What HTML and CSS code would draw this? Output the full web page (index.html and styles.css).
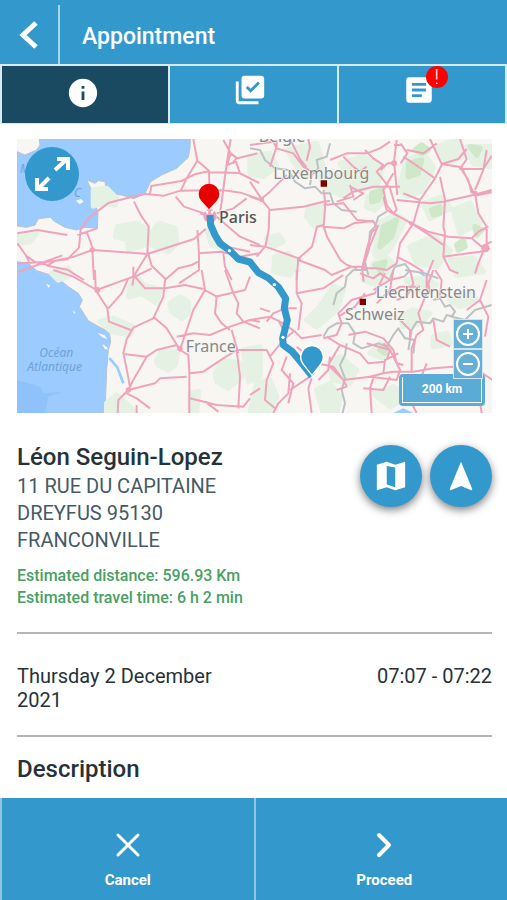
FILE: index.html
```html
<!DOCTYPE html>
<html lang="en">
<head>
    <meta charset="UTF-8">
    <meta name="viewport" content="width=device-width, initial-scale=1.0">
    <title>Appointment</title>
    <link rel="stylesheet" href="styles.css">
</head>
<body>

<div class="app">
    <header class="header">
        <button type="button" class="btn-back" aria-label="Back">
            <svg width="20" height="30" viewBox="0 0 20 30"><path d="M17 3L4 15l13 12" fill="none" stroke="#fff" stroke-width="5"/></svg>
        </button>
        <h1>Appointment</h1>
    </header>

    <nav class="tabs">
        <button type="button" class="tab active" aria-label="Information">
            <svg class="icon" viewBox="0 0 24 24"><path d="M12 2C6.480 2 2 6.480 2 12s4.480 10 10 10 10-4.480 10-10S17.520 2 12 2zm1 15h-2v-6h2v6zm0-8h-2V7h2v2z"/></svg>
        </button>
        <button type="button" class="tab" aria-label="Tasks">
            <span class="icon-wrap">
                <svg class="icon" viewBox="0 0 24 24"><path d="M20 2H8c-1.100 0-2 .9-2 2v12c0 1.100.9 2 2 2h12c1.100 0 2-.9 2-2V4c0-1.100-.9-2-2-2zm-7.530 12L9 10.500l1.400-1.410 2.070 2.080L17.600 6 19 7.410 12.470 14zM4 6H2v14c0 1.100.9 2 2 2h14v-2H4V6z"/></svg>
            </span>
        </button>
        <button type="button" class="tab" aria-label="Notes">
            <span class="icon-wrap">
                <svg class="icon" viewBox="0 0 24 24"><path d="M19 3H5c-1.100 0-2 .9-2 2v14c0 1.100.9 2 2 2h14c1.100 0 2-.9 2-2V5c0-1.100-.9-2-2-2zm-5 14H7v-2h7v2zm3-4H7v-2h10v2zm0-4H7V7h10v2z"/></svg>
                <span class="badge">!</span>
            </span>
        </button>
    </nav>

    <main class="content">
        <!-- Map -->
        <div class="map">
            <svg class="map-image" viewBox="21 27 1425 822" role="img" aria-label="Route from Paris">
                <rect class="land" x="21" y="27" width="1425" height="822"/>

                <!-- Sea -->
                <path class="sea" d="M88 27H541L540 55 535 82 500 115 455 135 422 155 405 190 372 206 335 195 290 190 285 155 265 152 255 160 230 150 245 180 255 215 264 250 262 295 225 292 200 300 165 292 130 272 122 262 85 266 75 285 50 292 21 288V65L45 75 80 60 90 45z"/>
                <path class="sea" d="M21 395L55 400 80 422 122 435 150 450 175 470 205 490 217 510 208 530 235 572 270 592 298 605 302 635 295 660 290 720 285 849H21z"/>
                <path class="sea-deep" d="M21 750L90 770 100 790 155 786 115 800 105 849H21z"/>
                <path class="river" d="M298 684L322 712 340 760"/>
                <path class="lake" d="M1150 849l30-14 30 14zM1222 425l40 15-10 8z"/>
                <path class="land" d="M198 212l15-5 8 8-12 8zM108 462l12 4-4 8zM188 543l8 3-3 6zM262 608l22 8 8 12-15-6zM276 642l14 8 4 10-10-4z"/>

                <!-- Forests -->
                <g class="forest">
                    <path d="M250 180l40-5 30 30-5 20-35-5-30 8zM322 290l60-10 30 20-10 45-45 15-5-30-35-10zM425 310l20-30 50 15 5 45-25 25-50-20zM590 300l30 10 15 45-30-10zM30 315l50-5-20 25-35 5zM125 430l50-15 10 20-40 15z"/>
                    <path d="M270 575l40-10 60 25-10 25-55-10zM365 450l15-10 20 25 50 15-10 40-45-30-40 10zM480 520l30-20 25 15 0 35-20 15-30-20zM440 690l15-25 50 0-10 40-20 15-30-15zM615 730l25-40 50 10 5 40-40 35-35-20zM700 660l50-10v90l-35 15zM540 790l25-5-5 64h-20zM290 820l30-25 50 45v9h-80z"/>
                    <path d="M720 80l60-10 20 40-40 30-40-10zM830 60l90-20 20 70-60 30zM895 230l40-5v60l-20 5-25-30zM770 325l35-10 15 20-30 15zM795 380l40-10 25 30-20 35-50-10zM990 100l70-20 60 30-20 60-60 10zM930 130l70 10 50 30-50 30-60-30zM1075 200l45-25v40l-25 25-25-10zM1105 280l50-25 30 15-40 80-30 35-20-10zM1090 400l40-15 25 20-30 30h-40zM1190 90l50-20 30 40-30 70-45 20-30-20zM1280 50l60-20 20 50-50 20zM1240 220l60-20 20 35-60 30zM1330 240l50-20 30 60-60 30zM1370 50h70v60l-50-10zM1200 350l70-30 50 40-40 50-60-10zM1320 390l70-5 30 40-80 10z"/>
                    <path d="M890 570l40-40 40-60 30 10-20 60-60 50zM955 700l35-20 50 40-20 40-50-10zM920 780l40-20 30 40-10 49h-40zM740 760l40-10 20 50-20 49h-60zM1080 670l30-30 30 15-20 30zM1170 560l40-20 50 10-30 30-50 10zM1090 790l60-20 40 30-50 30zM1060 450l40-15 30 10-30 20zM1190 450l60-5 30 20-70 20zM1320 510l60-20 20 20-50 20zM1270 620l40-10 10 30-50 10z"/>
                </g>
                <g class="forest dark">
                    <path d="M1120 290l40-20-15 50-35 30zM1195 100l40-10-10 40-30 10zM1215 60l20-15 20 15-20 10zM1085 190l30-10-10 30-20 5zM1095 405l30-10-10 30zM1340 345l20-15 5 20-20 10zM1395 290l20 10-15 15zM1265 240l25-10 0 20-20 5zM1110 660l20-8-5 18zM1380 50l30 5-10 20z"/>
                </g>

                <!-- Borders -->
                <g class="border">
                    <path d="M720 55l30 5 15 30 30 25 40 5 20 35 30 20 30-5 20 20 25 0 10 30 25 20 45 5M960 40l-10 40-30 10 5 25-20 20-5 30M1130 245l-25 15-10 30-15 15-5 60-10 30 10 40"/>
                    <path d="M1070 420l-40 0-20 20-5 30-25 20-10 35M1140 445l15-35 30-8 15 20-20 20M1185 420l60 10 40 15M940 620l15-25 25-15 35 0 20 30-5 30 25 15 50-15 25 10 20-35 15-20 20 30 30 5-5 40M1195 660l10-60 15-25 40 5 10-15 30 10 10-20 20 5M1270 510l20-5 15 25 15-5 15 20-10 15 40 10 30-30 50-15M1010 640l-5 35-15 30 15 40-10 35 10 40-10 40"/>
                </g>

                <!-- Roads -->
                <g class="road">
                    <path d="M550 27l12 65 35 30 1 40M562 92l-30 50-20 40-50 15-55-5-40 8-70 18-60 45-25 35-5 55-35 35-65 8-110 40 20-35 85-5 55-20M512 182l125-2 55 8 58 20M598 127l90 2 60 30M424 168l90-15 40-20 45-10M420 190l5-25M497 200l25 30 60 20M662 27l-12 75-20 150M640 30l22 40 20 15 60-15M662 70l-10 35 26-10 12 35M678 85l-10 15M372 215l20 40 24 35-4 82 140-45 35-30M247 360l5 90M230 305l20 55 165 12 10 35 45 43M247 360l-55 20-55 12-25 15 60 12 50 31M112 405l-35-8-30-20M22 340l25 35 10 20M412 372l-40 65-5 30M22 310l60-10 90 15M600 290l50 60 70 15M620 260l70 60 60 25M562 300l5 70v50l-60 40M565 370l70-5 55 15 55-10M640 370l5 40 20 40M570 250l30 10M620 250l50-15 40-30M262 295l-60 20"/>
                    <path d="M130 420l60 20 70 40 110-40 0-30M255 420l2 60 35 55 5 40 65 25M355 445l-20 45-40 45M375 440l30 35 60 0 60-10 55 12M375 440l50-25M465 450l-5 50-30 65-60 28-20 35-10 40 15 75 5 30M430 560l40 35 40 65 25 15 3 50 0 150M465 450l40-35 40-10 20-10M575 420l10 60-35 60-20 60-20 60M500 620l50-10 50 5 60-25 60-20 30 5M645 420l25 70 15 30-5 30 20 25 50 20M585 480l35 20-5 50 20 30 25 20M615 500l90-20 15-40M340 672l70 8 30-20 60-15 10 15M410 680l-40 70-15 30 80-20 15-15 80-5M355 780l-30 30-2 39M350 790l30 15 40 30M380 825v24M540 730l40-5 60-40 40-25 70 0M680 660l10 80-5 95M540 805l80 20 80 5 20-25M585 815l40 30M665 600l20 70M720 795l30-20"/>
                    <path d="M720 45l70-10 10 20 50 15 30 40 25 15M840 27l30 60 20 25M895 27l5 25-10 40M780 110l20-60 0-20M720 200l30 10 30-25 30-30 20-20M720 155l20 30 20 30 20 25 100-10 60-15 20-2M778 240l-2 60-10 50 100 35 40-35 15-60 20-5M941 180l5 40-5 70 10 30 40 70 20 15 30 10M941 225l60-5 40 50 50 5 10 20-15 10-15 50-15 60 5 40M941 290l60 5 30-15 60-8M865 385l-5 65M865 390l80 30 20 15 60-25 40 0M720 345l45 5M740 380l25-30M1020 165l10 35-50 15M1000 205l30-20 60-15 80 0M1020 170l40 20-30 20M960 90l50-20 60 0 40-15 30-20M1000 80l30 30 20 15 20-15M1065 60l25 25 30 20-20 20 40 50 20 65-10 10-20-25-10-45 30-50"/>
                    <path d="M1160 30l-8 65 10 100M1152 100l-20 0-20 20M1152 45l25 0M1172 40l20 30-20 30M1160 210l100 10 40-5 90-20 55-15M1260 27l35 75 60 10 40 85 50-10M1275 145l-35-25-60-40M1275 145l20-40M1275 145l-45 65-20 70-40 60-10 60-30 20-30-5-40 0 5-30 20-50 20-50M1120 200l10 40 75 40 60 40 35 25M1230 210l-50-20M1290 140l15 70-5 80 5 20M1205 280l50 25 60 15 70 5 20-20 30-15M1305 310l-5 70 20 40 25 10M1300 380l110-15 30-10M1395 190l10 60 25 40 0 65M1385 325l30 25 30-15M1425 350l-20 50-10 30M1295 102l50-15 25-30M1355 120l20 30 10 40M1160 380l40 20 40 25M1350 27l20 60-20 30 70 0 25-40M1190 60l50 10 40-30M1430 60l-10 60-25 60"/>
                    <path d="M720 570l60-10 40 20 35 25 20 20 60-10M770 575l20-25 35-15 35 0M780 545l-30-10M860 420v70l15 30-10 80M860 490l80-15 60-40M720 660l50 0 20 40-20 50M770 750l-5 60 30 25M850 605l-30 25-40 50M840 730l-5 60-30 30-15 29M905 745l-10 30 10 74M840 780l60-40M820 600l-15-30M830 680l-15 40 35 40-15 60M860 650l60 50 50 10 30 40 80-10 80 10 10-30-30-60-70-20M940 625l40-10 15-35-10-30 40-40 70-20 30-60M950 620l40 25 60 25 25 30 50-5M1015 615l50-10 55 20 30 35 10 40 20 5M985 560l50-30 30-40M960 680l-5 40-30 30M1000 750l10 20-30 10M1090 745l-10 30 5 74M1080 740l40-10 30-5 60 0 60-10 60-5 80 15 45 30M1120 730l5-40 40-20M1140 740l-20 40-60-5M1205 725l0-70 15-40 20-15-15-50 25-60 0-50 20-50M1250 700l-20 50M1200 420l10 40-20 40-30 10M1270 420l-15 40 5 30M1290 500l5-50-20-30M1200 630l0-30-30-30M1270 570l10 60 40 20M1180 750l20 60 20 39M1330 700l30-40M1370 540l40-30 20-60M1410 510l25 50-10 60M1400 740l15 110M1120 640l20 20-10 30M990 645l-35 60 40 40M1050 430l40 15 20-15 30 20 40-10M1150 420l-10 60-40 40M1120 500l50-30 60 0M1140 450l-50 30"/>
                </g>
                <g class="hub">
                    <circle cx="247" cy="360" r="8"/><circle cx="414" cy="372" r="6"/><circle cx="262" cy="480" r="9"/><circle cx="510" cy="656" r="8"/><circle cx="600" cy="258" r="20"/><circle cx="1152" cy="100" r="9"/><circle cx="1426" cy="355" r="12"/><circle cx="1395" cy="190" r="8"/><circle cx="756" cy="210" r="7"/><circle cx="355" cy="780" r="8"/><circle cx="1203" cy="280" r="6"/><circle cx="867" cy="388" r="6"/>
                </g>

                <!-- Labels -->
                <g class="labels">
                    <text x="746" y="37">Belgie</text>
                    <text x="790" y="146">Luxembourg</text>
                    <text x="1097" y="503">Liechtenstein</text>
                    <text x="1005" y="570">Schweiz</text>
                    <text x="527" y="667">France</text>
                    <text class="city" x="627" y="278">Paris</text>
                    <text class="water" x="88" y="680">Océan</text>
                    <text class="water" x="52" y="724">Atlantique</text>
                    <text class="water" x="30" y="130">M</text>
                    <text class="water" x="192" y="200">C</text>
                </g>
                <path fill="#800000" d="M932 151h19v19h-19zM1049 506h19v19h-19z"/>

                <!-- Route -->
                <path class="route" d="M600 255L602 285 615 315 630 340 660 362 685 387 720 396 745 428 775 444 805 471 827 505 823 535 832 570 818 625 820 645 847 665 880 705 906 738"/>
                <g fill="#fff">
                    <circle cx="658" cy="362" r="5"/><circle cx="793" cy="464" r="5"/><circle cx="819" cy="622" r="5"/>
                    <path d="M584 240l8 14 4-10zM614 240l-8 14-4-10z"/>
                </g>
                <path fill="#e60000" d="M597 238l-22-24a31 31 0 1 1 44 0z"/>
                <path class="marker" d="M906 736l-26-33a34 34 0 1 1 52 0z"/>
            </svg>

            <button type="button" class="btn-expand" aria-label="Full screen">
                <svg width="54" height="54" viewBox="0 0 54 54"><path d="M30 23L42 12M32 12h11v11M24 31L13 42M12 31v11h11" fill="none" stroke="#fff" stroke-width="4"/></svg>
            </button>
            <div class="map-scale"><span>200 km</span></div>
            <div class="map-zoom">
                <button type="button" aria-label="Zoom in">
                    <svg width="26" height="26" viewBox="0 0 26 26"><circle cx="13" cy="13" r="11"/><path d="M13 8v10M8 13h10"/></svg>
                </button>
                <button type="button" aria-label="Zoom out">
                    <svg width="26" height="26" viewBox="0 0 26 26"><circle cx="13" cy="13" r="11"/><path d="M8 13h10"/></svg>
                </button>
            </div>
        </div>

        <!-- Customer -->
        <section class="customer">
            <div class="customer-info">
                <h2>Léon Seguin-Lopez</h2>
                <p class="address">11 RUE DU CAPITAINE<br>DREYFUS 95130<br>FRANCONVILLE</p>
                <p class="estimate">Estimated distance: 596.93 Km<br>Estimated travel time: 6 h 2 min</p>
            </div>
            <div class="actions">
                <button type="button" class="btn-round" aria-label="Show map">
                    <svg class="icon" viewBox="0 0 24 24"><path fill-rule="evenodd" d="M2 4l7-2 6 2 7-2v18l-7 2-6-2-7 2zM9 5v13l6 2V6z"/></svg>
                </button>
                <button type="button" class="btn-round" aria-label="Navigate">
                    <svg class="icon" viewBox="0 0 24 24"><path d="M12 2L4 21.300l.7.7 7.300-3 7.300 3 .7-.7z"/></svg>
                </button>
            </div>
        </section>

        <!-- Date and time -->
        <section class="schedule">
            <span class="date">Thursday 2 December 2021</span>
            <span>07:07 - 07:22</span>
        </section>

        <section class="description">
            <h2>Description</h2>
        </section>
    </main>

    <footer class="footer">
        <button type="button">
            <svg width="30" height="30" viewBox="0 0 30 30"><path d="M5 5l20 20M25 5L5 25"/></svg>
            Cancel
        </button>
        <button type="button">
            <svg width="30" height="30" viewBox="0 0 30 30"><path d="M10 5l10 10-10 10" stroke-width="4"/></svg>
            Proceed
        </button>
    </footer>
</div>

</body>
</html>
```
FILE: styles.css
```css
* {
    box-sizing: border-box;
}
body {
    margin: 0;
    font-family: Roboto, sans-serif;
    background-color: #fff;
    color: #263238;
}
button {
    padding: 0;
    border: none;
    background: none;
    color: #fff;
    font-family: inherit;
    cursor: pointer;
}
svg {
    display: block;
}
h1, h2, p {
    margin: 0;
}
.app {
    display: flex;
    flex-direction: column;
    height: 100vh;
}
.icon {
    width: 34px;
    height: 34px;
    fill: #fff;
}

/* Header */
.header {
    display: flex;
    flex-shrink: 0;
    align-items: flex-end;
    height: 64px;
    background-color: #3399cc;
    color: #fff;
}
.btn-back {
    display: flex;
    align-items: center;
    justify-content: center;
    width: 60px;
    height: 59px;
    border-right: 2px solid #a6d5ee;
}
.header h1 {
    padding-left: 22px;
    font-size: 23px;
    line-height: 54px;
    font-weight: 500;
}

/* Tabs */
.tabs {
    display: grid;
    grid-template-columns: repeat(3, 1fr);
    flex-shrink: 0;
    gap: 2px;
    padding: 2px 2px 1px;
    background-color: #d5eaf5;
}
.tab {
    display: flex;
    justify-content: center;
    height: 57px;
    padding-top: 7px;
    background-color: #3399cc;
}
.tab.active {
    padding-top: 10px;
    padding-right: 4px;
    background-color: #1a4a61;
}
.icon-wrap {
    position: relative;
    margin-right: 6px;
}
.badge {
    position: absolute;
    top: -7px;
    right: -12px;
    width: 22px;
    height: 22px;
    border-radius: 50%;
    background-color: #ff0000;
    font-size: 20px;
    line-height: 22px;
    font-weight: 300;
    text-align: center;
}

/* Content */
.content {
    flex: 1;
    min-height: 0;
    overflow: hidden;
    padding: 15px 15px 0 17px;
}

/* Map */
.map {
    position: relative;
}
.map-image {
    width: 100%;
    height: auto;
}
.land {
    fill: #f8f6f3;
}
.sea, .lake {
    fill: #9bcbff;
}
.sea {
    stroke: #b9c3cb;
    stroke-width: 3px;
}
.sea-deep {
    fill: #8fc2fb;
}
.river {
    fill: none;
    stroke: #9bcbff;
    stroke-width: 8px;
}
.forest {
    fill: #e5f1e2;
    stroke: #e5f1e2;
    stroke-width: 16px;
    stroke-linejoin: round;
}
.forest.dark {
    fill: #cfe8ca;
    stroke: #cfe8ca;
}
.border {
    fill: none;
    stroke: #bcc2c4;
    stroke-width: 6px;
    stroke-linejoin: round;
}
.road {
    fill: none;
    stroke: #f0a3bc;
    stroke-width: 6px;
    stroke-linejoin: round;
}
.hub {
    fill: #f0a3bc;
}
.labels {
    font-family: "Noto Sans", sans-serif;
    font-size: 48px;
    fill: #888;
    stroke: #f7f5f2;
    stroke-width: 4px;
    paint-order: stroke;
}
.labels .city {
    fill: #555;
    font-weight: 500;
}
.labels .water {
    font-size: 36px;
    font-style: italic;
    fill: #6ea3d8;
    stroke: none;
}
.route {
    fill: none;
    stroke: #3399cc;
    stroke-width: 21px;
    stroke-linejoin: round;
}
.marker {
    fill: #3399cc;
    stroke: #fff;
    stroke-width: 4px;
}
.btn-expand {
    position: absolute;
    top: 8px;
    left: 8px;
    border-radius: 50%;
    background-color: #3399cc;
}
.map-zoom {
    position: absolute;
    right: 9px;
    bottom: 34px;
    display: flex;
    flex-direction: column;
    gap: 2px;
    border: 1px solid #cfe6f2;
    background-color: #cfe6f2;
}
.map-zoom button {
    padding: 1px;
    background-color: #66b0d8;
}
.map-zoom svg {
    fill: none;
    stroke: #fff;
    stroke-width: 2px;
}
.map-scale {
    position: absolute;
    right: 7px;
    bottom: 7px;
    width: 86px;
    padding: 3px;
    border-radius: 4px;
    background-color: #5aabd5;
    color: #fff;
    font-size: 12px;
    line-height: 24px;
    font-weight: 700;
    text-align: center;
}
.map-scale span {
    display: block;
    height: 26px;
    border: 1px solid #fff;
    border-top: none;
}

/* Customer */
.customer {
    display: flex;
    justify-content: space-between;
    padding: 29px 0 23px;
    border-bottom: 2px solid #b5b5b5;
}
h2 {
    font-size: 24px;
    line-height: 30px;
    font-weight: 500;
}
.address {
    margin-top: 1px;
    color: #455a64;
    font-size: 20px;
    line-height: 27px;
}
.estimate {
    margin-top: 11px;
    color: #4a9f62;
    font-size: 16px;
    line-height: 22px;
    font-weight: 500;
}
.actions {
    display: flex;
    gap: 8px;
    padding-top: 3px;
}
.btn-round {
    display: flex;
    align-items: center;
    justify-content: center;
    width: 62px;
    height: 62px;
    border-radius: 50%;
    background-color: #3399cc;
    box-shadow: 0 3px 8px rgba(0, 0, 0, 0.5);
}

/* Date and time */
.schedule {
    display: flex;
    justify-content: space-between;
    padding: 30px 0 23px;
    border-bottom: 2px solid #b5b5b5;
    font-size: 20px;
    line-height: 24px;
}
.date {
    width: 50%;
}
.description {
    padding-top: 17px;
}

/* Footer */
.footer {
    display: grid;
    grid-template-columns: repeat(2, 1fr);
    flex-shrink: 0;
    gap: 2px;
    height: 102px;
    padding-left: 2px;
    background-color: #8fc5e3;
}
.footer button {
    display: flex;
    flex-direction: column;
    align-items: center;
    padding-top: 32px;
    background-color: #3399cc;
    font-size: 15px;
    line-height: 20px;
    font-weight: 700;
    gap: 10px;
}
.footer button:last-child {
    padding-left: 6px;
}
.footer svg {
    fill: none;
    stroke: #fff;
    stroke-width: 3px;
    stroke-linecap: round;
    stroke-linejoin: round;
}
```
